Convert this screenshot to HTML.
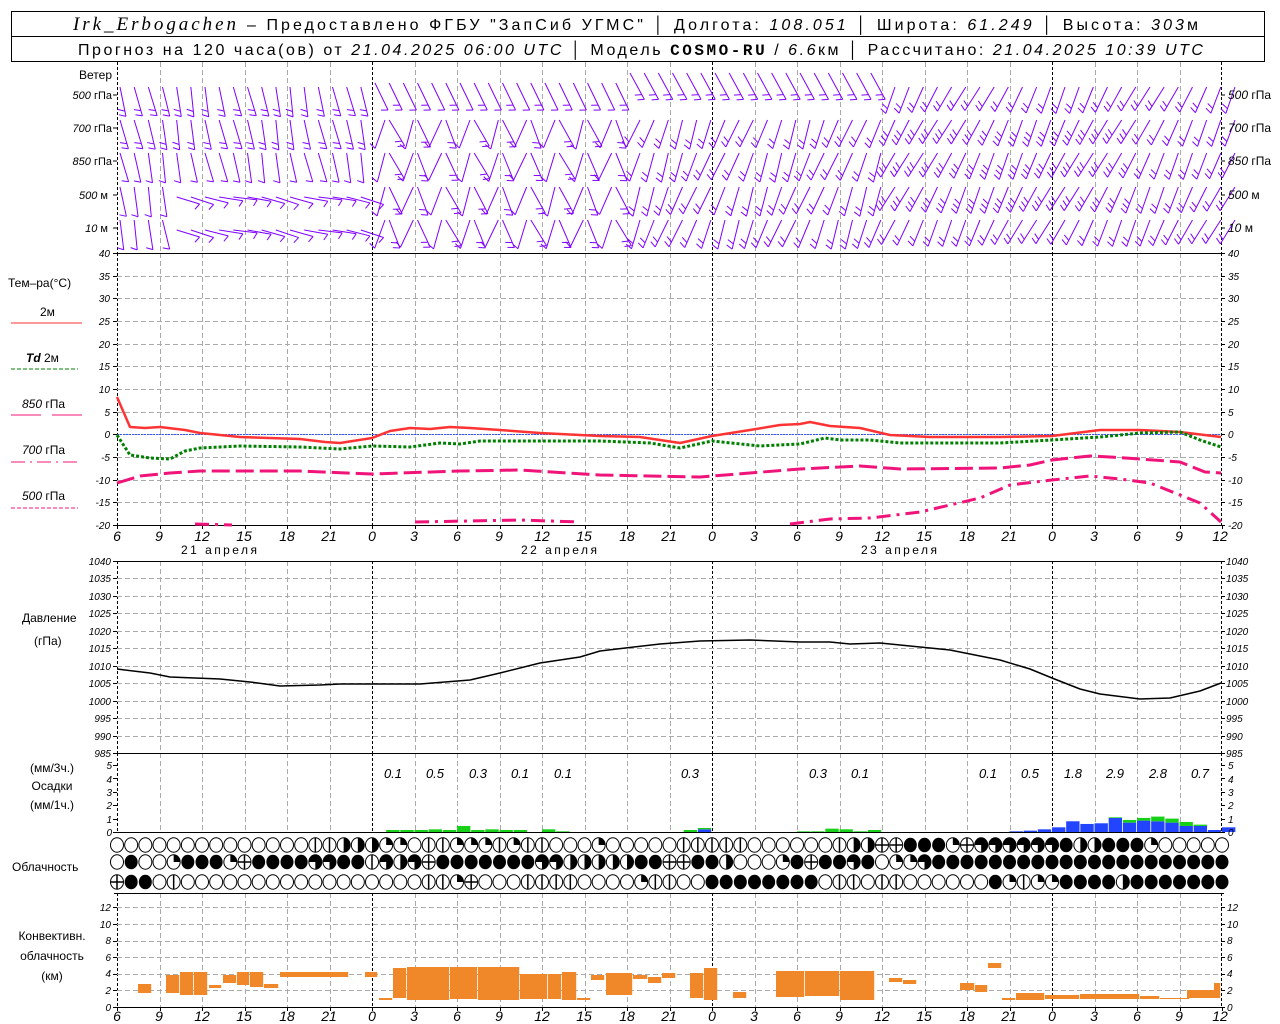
<!DOCTYPE html>
<html><head><meta charset="utf-8">
<style>
html,body{margin:0;padding:0;background:#fff;}
svg{display:block;font-family:"Liberation Sans",sans-serif;}
.t{font-size:12px;fill:#000;}
.n{font-size:10px;font-style:italic;fill:#000;font-family:"Liberation Sans",sans-serif;}
.h{font-size:14px;font-style:italic;fill:#000;font-family:"Liberation Sans",sans-serif;}
.hd{font-size:16px;fill:#000;}
.hi{font-size:19px;font-style:italic;fill:#000;font-family:"Liberation Serif",serif;}
.p{font-size:13px;font-style:italic;fill:#000;}
</style></head>
<body>
<svg id="s" width="1280" height="1024" viewBox="0 0 1280 1024" xmlns="http://www.w3.org/2000/svg">
<rect x="0" y="0" width="1280" height="1024" fill="#fff"/>
<g id="grid"></g>
<g id="data"></g>
<rect x="11.5" y="11.5" width="1253" height="50" fill="none" stroke="#000"/>
<line x1="11" y1="36.5" x2="1265" y2="36.5" stroke="#000"/>
<text x="73" y="30" class="hi" textLength="163" lengthAdjust="spacing">Irk_Erbogachen</text>
<text x="247" y="30" class="hd" textLength="951" lengthAdjust="spacing">– Предоставлено ФГБУ "ЗапСиб УГМС" │ Долгота: <tspan font-style="italic">108.051</tspan> │ Широта: <tspan font-style="italic">61.249</tspan> │ Высота: <tspan font-style="italic">303</tspan>м</text>
<text x="78" y="55" class="hd" textLength="1125" lengthAdjust="spacing">Прогноз на 120 часа(ов) от <tspan font-style="italic">21.04.2025 06:00 UTC</tspan> │ Модель <tspan font-family="Liberation Mono" font-weight="bold">COSMO-RU</tspan> / <tspan font-style="italic">6.6</tspan>км │ Рассчитано: <tspan font-style="italic">21.04.2025 10:39 UTC</tspan></text>
<g class="t" text-anchor="end">
<text x="112" y="79">Ветер</text>
<text x="112" y="99" font-size="11"><tspan font-style="italic">500</tspan> гПа</text>
<text x="112" y="132" font-size="11"><tspan font-style="italic">700</tspan> гПа</text>
<text x="112" y="165" font-size="11"><tspan font-style="italic">850</tspan> гПа</text>
<text x="108" y="199" font-size="11"><tspan font-style="italic">500</tspan> м</text>
<text x="108" y="232" font-size="11"><tspan font-style="italic">10</tspan>   м</text>
</g>
<g class="t" font-size="11">
<text x="1228" y="99"><tspan font-style="italic">500</tspan> гПа</text>
<text x="1228" y="132"><tspan font-style="italic">700</tspan> гПа</text>
<text x="1228" y="165"><tspan font-style="italic">850</tspan> гПа</text>
<text x="1228" y="199"><tspan font-style="italic">500</tspan> м</text>
<text x="1228" y="232"><tspan font-style="italic">10</tspan>   м</text>
</g>
<text x="8" y="287" class="t">Тем–ра(°С)</text>
<text x="40" y="316" class="t" font-size="11">2м</text>
<line x1="11" y1="323" x2="82" y2="323" stroke="#ff3333"/>
<text x="26" y="362" class="t" font-size="11"><tspan font-style="italic" font-weight="bold">Td</tspan>  2м</text>
<line x1="11" y1="369" x2="78" y2="369" stroke="#008000" stroke-dasharray="4,2"/>
<text x="22" y="408" class="t" font-size="11"><tspan font-style="italic">850</tspan> гПа</text>
<line x1="11" y1="415" x2="41" y2="415" stroke="#f0147a"/><line x1="52" y1="415" x2="82" y2="415" stroke="#f0147a"/>
<text x="22" y="454" class="t" font-size="11"><tspan font-style="italic">700</tspan> гПа</text>
<line x1="11" y1="462" x2="78" y2="462" stroke="#f0147a" stroke-dasharray="14,5,2,5"/>
<text x="22" y="500" class="t" font-size="11"><tspan font-style="italic">500</tspan> гПа</text>
<line x1="11" y1="508" x2="78" y2="508" stroke="#f0147a" stroke-dasharray="4,2"/>
<g class="n" text-anchor="end">
<text x="110" y="257">40</text><text x="110" y="280">35</text><text x="110" y="302">30</text><text x="110" y="325">25</text><text x="110" y="348">20</text><text x="110" y="370">15</text><text x="110" y="393">10</text><text x="110" y="416">5</text><text x="110" y="438">0</text><text x="110" y="461">-5</text><text x="110" y="484">-10</text><text x="110" y="506">-15</text><text x="110" y="529">-20</text>
</g>
<g class="n">
<text x="1228" y="257">40</text><text x="1228" y="280">35</text><text x="1228" y="302">30</text><text x="1228" y="325">25</text><text x="1228" y="348">20</text><text x="1228" y="370">15</text><text x="1228" y="393">10</text><text x="1228" y="416">5</text><text x="1228" y="438">0</text><text x="1228" y="461">-5</text><text x="1228" y="484">-10</text><text x="1228" y="506">-15</text><text x="1228" y="529">-20</text>
</g>
<g class="h" text-anchor="middle">
<text x="117" y="541">6</text><text x="159" y="541">9</text><text x="202" y="541">12</text><text x="244" y="541">15</text><text x="287" y="541">18</text><text x="329" y="541">21</text><text x="372" y="541">0</text><text x="414" y="541">3</text><text x="457" y="541">6</text><text x="499" y="541">9</text><text x="542" y="541">12</text><text x="584" y="541">15</text><text x="627" y="541">18</text><text x="669" y="541">21</text><text x="712" y="541">0</text><text x="754" y="541">3</text><text x="797" y="541">6</text><text x="839" y="541">9</text><text x="882" y="541">12</text><text x="924" y="541">15</text><text x="967" y="541">18</text><text x="1009" y="541">21</text><text x="1052" y="541">0</text><text x="1094" y="541">3</text><text x="1137" y="541">6</text><text x="1179" y="541">9</text><text x="1220" y="541">12</text>
</g>
<g class="t" text-anchor="middle" font-size="13">
<text x="219" y="554" textLength="76" lengthAdjust="spacing">21 апреля</text><text x="559" y="554" textLength="76" lengthAdjust="spacing">22 апреля</text><text x="899" y="554" textLength="76" lengthAdjust="spacing">23 апреля</text>
</g>
<text x="22" y="622" class="t">Давление</text>
<text x="34" y="645" class="t">(гПа)</text>
<g class="n" text-anchor="end" font-size="9">
<text x="111" y="565">1040</text><text x="111" y="582">1035</text><text x="111" y="600">1030</text><text x="111" y="617">1025</text><text x="111" y="635">1020</text><text x="111" y="652">1015</text><text x="111" y="670">1010</text><text x="111" y="687">1005</text><text x="111" y="705">1000</text><text x="111" y="722">995</text><text x="111" y="740">990</text><text x="111" y="757">985</text>
</g>
<g class="n" font-size="9">
<text x="1226" y="565">1040</text><text x="1226" y="582">1035</text><text x="1226" y="600">1030</text><text x="1226" y="617">1025</text><text x="1226" y="635">1020</text><text x="1226" y="652">1015</text><text x="1226" y="670">1010</text><text x="1226" y="687">1005</text><text x="1226" y="705">1000</text><text x="1226" y="722">995</text><text x="1226" y="740">990</text><text x="1226" y="757">985</text>
</g>
<g class="t" text-anchor="middle">
<text x="52" y="772">(мм/3ч.)</text><text x="52" y="790">Осадки</text><text x="52" y="809">(мм/1ч.)</text>
</g>
<g class="n" text-anchor="end">
<text x="112" y="769">5</text><text x="112" y="783">4</text><text x="112" y="796">3</text><text x="112" y="809">2</text><text x="112" y="823">1</text><text x="112" y="836">0</text>
</g>
<g class="n">
<text x="1228" y="769">5</text><text x="1228" y="783">4</text><text x="1228" y="796">3</text><text x="1228" y="809">2</text><text x="1228" y="823">1</text><text x="1228" y="836">0</text>
</g>
<g class="p" text-anchor="middle">
<text x="393" y="778">0.1</text><text x="435" y="778">0.5</text><text x="478" y="778">0.3</text><text x="520" y="778">0.1</text><text x="563" y="778">0.1</text><text x="690" y="778">0.3</text><text x="818" y="778">0.3</text><text x="860" y="778">0.1</text><text x="988" y="778">0.1</text><text x="1030" y="778">0.5</text><text x="1073" y="778">1.8</text><text x="1115" y="778">2.9</text><text x="1158" y="778">2.8</text><text x="1200" y="778">0.7</text>
</g>
<text x="12" y="871" class="t">Облачность</text>
<g class="t" text-anchor="middle">
<text x="52" y="940">Конвективн.</text><text x="52" y="960">облачность</text><text x="52" y="980">(км)</text>
</g>
<g class="n" text-anchor="end">
<text x="111" y="911">12</text><text x="111" y="928">10</text><text x="111" y="944">8</text><text x="111" y="961">6</text><text x="111" y="977">4</text><text x="111" y="994">2</text><text x="111" y="1011">0</text>
</g>
<g class="n">
<text x="1227" y="911">12</text><text x="1227" y="928">10</text><text x="1227" y="944">8</text><text x="1227" y="961">6</text><text x="1227" y="977">4</text><text x="1227" y="994">2</text><text x="1227" y="1011">0</text>
</g>
<g class="h" text-anchor="middle">
<text x="117" y="1021">6</text><text x="159" y="1021">9</text><text x="202" y="1021">12</text><text x="244" y="1021">15</text><text x="287" y="1021">18</text><text x="329" y="1021">21</text><text x="372" y="1021">0</text><text x="414" y="1021">3</text><text x="457" y="1021">6</text><text x="499" y="1021">9</text><text x="542" y="1021">12</text><text x="584" y="1021">15</text><text x="627" y="1021">18</text><text x="669" y="1021">21</text><text x="712" y="1021">0</text><text x="754" y="1021">3</text><text x="797" y="1021">6</text><text x="839" y="1021">9</text><text x="882" y="1021">12</text><text x="924" y="1021">15</text><text x="967" y="1021">18</text><text x="1009" y="1021">21</text><text x="1052" y="1021">0</text><text x="1094" y="1021">3</text><text x="1137" y="1021">6</text><text x="1179" y="1021">9</text><text x="1220" y="1021">12</text>
</g>
</svg>
<script>
(function(){
var NS="http://www.w3.org/2000/svg";
var G=document.getElementById('grid'),D=document.getElementById('data');
function el(p,tag,a){var e=document.createElementNS(NS,tag);for(var k in a)e.setAttribute(k,a[k]);p.appendChild(e);return e;}
function ln(p,x1,y1,x2,y2,c,w,da){var a={x1:x1,y1:y1,x2:x2,y2:y2,stroke:c,'stroke-width':w||1};if(da)a['stroke-dasharray']=da;return el(p,'line',a);}
var X0=117,X1=1221,HX=14.1667;
function X(h){return X0+h*HX;}
var panels=[[62,253],[253,525],[561,753],[753,832],[893,1007]];
panels.forEach(function(pn){
 for(var i=1;i<26;i++){var x=Math.round(X0+i*42.5)+0.5;var zero=(i%8==6);
  if(zero)ln(G,x,pn[0],x,pn[1],'#000',1,'3,2');else ln(G,x,pn[0],x,pn[1],'#aaa',1,'5,3');}
 ln(G,X0+.5,pn[0],X0+.5,pn[1],'#000',1,'3,2');ln(G,X1+.5,pn[0],X1+.5,pn[1],'#000',1,'3,2');
});
for(var v=35;v>=-15;v-=5){var y=Math.round(253+(40-v)*4.533)+.5;ln(G,X0,y,X1,y,'#aaa',1,'5,3');}
for(var p=1035;p>=990;p-=5){var y=Math.round(561+(1040-p)*3.491)+.5;ln(G,X0,y,X1,y,'#aaa',1,'5,3');}
for(var k=2;k<=12;k+=2){var y=Math.round(1007-k*8.3)+.5;ln(G,X0,y,X1,y,'#aaa',1,'5,3');}
[253.5,525.5,561.5,753.5,1007.5].forEach(function(y){ln(G,X0,y,X1,y,'#000',1);});
ln(G,X0-3,832.5,X1+3,832.5,'#000',1);ln(G,X0-3,893.5,X1+3,893.5,'#000',1);
function ticks(ys){ys.forEach(function(y){ln(G,X0-4,y,X0,y,'#000');ln(G,X1,y,X1+4,y,'#000');});}
var ty=[];for(var v=40;v>=-20;v-=5)ty.push(Math.round(253+(40-v)*4.533)+.5);ticks(ty);
ty=[];for(var p=1040;p>=985;p-=5)ty.push(Math.round(561+(1040-p)*3.491)+.5);ticks(ty);
ty=[];for(var k=0;k<=5;k++)ty.push(Math.round(832-k*13.4)+.5);ticks(ty);
ty=[];for(var k=0;k<=12;k+=2)ty.push(Math.round(1007-k*8.3)+.5);ticks(ty);
ticks([95,128,161,195,228]);
for(var i=0;i<=26;i++){var x=Math.round(X0+i*42.5)+.5;ln(G,x,525,x,529,'#000');ln(G,x,1007,x,1011,'#000');}
ln(D,X0,434.5,X1,434.5,'#3355ff',1,'2,1');
function poly(pts,c,w,da){var s=pts.map(function(p){return p[0]+','+p[1];}).join(' ');var a={points:s,fill:'none',stroke:c,'stroke-width':w,'stroke-linejoin':'round'};if(da)a['stroke-dasharray']=da;el(D,'polyline',a);}
poly([[117,397],[130,427],[145,428],[160,427],[185,430],[200,433],[240,437],[300,439],[325,442],[340,443],[372,438],[390,431],[410,428],[430,429],[450,427],[470,428],[500,430],[540,433],[600,436],[640,437],[680,443],[712,436],[750,430],[780,425],[800,424],[810,422],[830,426],[860,428],[890,435],[930,437],[1000,437],[1052,436],[1100,430],[1140,430],[1180,432],[1221,437]],'#ff3333',2.5);
poly([[117,435],[130,455],[150,458],[170,459],[185,451],[200,448],[240,446],[300,447],[340,449],[372,446],[410,447],[440,443],[460,444],[480,441],[500,441],[600,441],[650,443],[680,448],[712,441],[760,446],[800,444],[825,438],[840,440],[870,440],[900,443],[1000,443],[1052,440],[1100,437],[1140,433],[1180,432],[1200,440],[1221,447]],'#008000',3,'3,2');
poly([[117,483],[140,476],[170,473],[200,471],[300,471],[372,474],[460,471],[520,470],[600,475],[700,477],[800,469],[860,466],[900,469],[1000,468],[1030,465],[1052,460],[1090,456],[1110,457],[1140,459],[1180,462],[1205,472],[1221,473]],'#f0147a',3,'18,6');
poly([[195,524],[232,525]],'#f0147a',3,'14,6,3,6');
poly([[415,522],[520,520],[580,522]],'#f0147a',3,'14,6,3,6');
poly([[790,524],[830,519],[870,518],[920,512],[980,498],[1010,485],[1052,480],[1090,476],[1120,479],[1150,483],[1200,503],[1221,522]],'#f0147a',3,'14,6,3,6');
poly([[117,669],[150,673],[170,677],[220,679],[250,682],[280,686],[320,685],[340,684],[420,684],[470,680],[500,673],[540,663],[580,657],[600,651],[660,644],[700,641],[750,640],[800,642],[830,642],[850,644],[880,643],[900,645],[950,650],[980,656],[1000,660],[1030,669],[1052,678],[1080,689],[1100,694],[1140,699],[1170,698],[1200,691],[1221,683]],'#000',1.5);
function bar(i,v,c,base){var b=base||0;var y1=832-(b+v)*13.4;el(D,'rect',{x:X(i),y:y1,width:HX-0.8,height:v*13.4,fill:c});}
var gr={19:.15,20:.15,21:.15,22:.2,23:.15,24:.45,25:.15,26:.2,27:.15,28:.15,30:.2,31:.05,40:.15,48:.05,49:.05,50:.25,51:.2,52:.05,53:.15};
for(var k in gr)bar(+k,gr[k],'#18d018');
bar(41,0.2,'#2244ff');bar(41,0.1,'#18d018',0.2);
var bl={63:.05,64:.1,65:.2,66:.35,67:.8,68:.6,69:.65,70:1.05,71:.7,72:.85,73:.8,74:.7,75:.45,76:.45,77:.15,78:.35};
var gt={70:1.1,71:.9,72:1.05,73:1.15,74:1.0,75:.75,76:.55};
for(var k in bl){bar(+k,bl[k],'#2244ff');if(gt[k])bar(+k,gt[k]-bl[k],'#18d018',bl[k]);}
var cv=[[138,152,984,993],[166,180,975,993],[180,194,972,995],[194,208,972,995],[209,222,985,988],[223,237,975,983],[237,250,972,985],[250,264,972,987],[264,279,984,988],[280,349,972,977],[365,378,972,977],[379,393,998,1000],[393,407,968,998],[407,450,967,1000],[450,478,967,999],[478,520,967,1000],[520,548,974,999],[548,562,974,999],[562,577,972,1000],[577,591,998,1000],[591,605,975,980],[606,633,973,995],[633,648,975,979],[648,662,977,983],[662,676,973,978],[690,704,973,998],[704,718,968,1000],[733,747,992,998],[776,805,971,997],[805,840,971,996],[840,875,971,1000],[889,903,978,982],[903,917,980,984],[960,975,983,990],[975,988,985,992],[988,1002,963,968],[1002,1016,998,1000],[1016,1045,993,1000],[1045,1080,995,999],[1080,1140,994,999],[1140,1160,996,999],[1160,1190,998,999],[1187,1221,990,998],[1214,1221,983,990]];
cv.forEach(function(b){el(D,'rect',{x:b[0],y:b[2],width:b[1]-b[0]-0.8,height:b[3]-b[2],fill:'#f0882a'});});
var rows=[
 ["oooooooooooooovvhhhqqovvqqqvqvvoooqooooovvvvvoooooovhhccbbbqcttttttbhhbbbqoooo",845],
 ["obooqbbbqcbbbbttbbvthtcbbbbbbbtthhhhhbbccbbhoooqbcbbtboqqtbbbbbbbbbbbbbbbbbbbbbb",862],
 ["cbbovooooooooooooooooovvqcooovvvvooooqvvoobbbbbbbbovvovvoooooobqvqqbbbbhbbbbbbbbq",882]];
rows.forEach(function(r){var s=r[0],cy=r[1];
 for(var i=0;i<79;i++){var ch=s[i]||'o';var cx=X(i);
  var g=el(D,'g',{});
  if(ch=='b'){el(g,'ellipse',{cx:cx,cy:cy,rx:6.5,ry:7.2,fill:'#000'});continue;}
  el(g,'ellipse',{cx:cx,cy:cy,rx:6.5,ry:7.2,fill:'#fff',stroke:'#000','stroke-width':1});
  if(ch=='h')el(g,'path',{d:'M'+cx+','+(cy-7.2)+' A6.5,7.2 0 0,1 '+cx+','+(cy+7.2)+'Z',fill:'#000'});
  if(ch=='q')el(g,'path',{d:'M'+cx+','+cy+' L'+cx+','+(cy-7.2)+' A6.5,7.2 0 0,1 '+(cx+6.5)+','+cy+'Z',fill:'#000'});
  if(ch=='t')el(g,'path',{d:'M'+cx+','+cy+' L'+(cx-6.5)+','+cy+' A6.5,7.2 0 1,1 '+cx+','+(cy+7.2)+'Z',fill:'#000'});
  if(ch=='v'||ch=='c')ln(g,cx,cy-7,cx,cy+7,'#000',1.5);
  if(ch=='c')ln(g,cx-6,cy,cx+6,cy,'#000',1.5);
 }});
var W=el(D,'g',{});
var rowY=[95,128,161,195,228];
function barb(x,y,a,L,n){var ux=Math.sin(a),uy=Math.cos(a);
 var x2=x+ux*L,y2=y+uy*L;ln(W,x,y,x2,y2,'#8000ff',1);
 var ba=a-2.0;var bx=Math.sin(ba)*7,by=Math.cos(ba)*7;
 for(var k=0;k<n;k++){var f=1-k*0.18;var px=x+ux*L*f,py=y+uy*L*f;ln(W,px,py,px+bx,py+by,'#8000ff',1);}}
for(var r=0;r<5;r++){
 for(var i=0;i<79;i++){
  var x=X(i)+3,y=rowY[r]-8,a,n=2,L=30;
  if(i<18){a=0.2+0.1*Math.sin(i*0.9+r);n=(r<2)?2:1;
    if(r>=3&&i>3){a=1.35+0.1*Math.sin(i);L=24;y=rowY[r]+2;n=1;}}
  else if(i<36){a=(i%2?0.45:-0.35)+0.1*Math.sin(i+r);n=1+(i%2);
    if(r==0){a=0.45;y=rowY[r]-12;}}
  else if(i<54){a=-0.35+0.12*Math.sin(i*0.8+r*1.3);n=2;
    if(r==0){a=0.5;y=rowY[r]-22;}}
  else{a=-0.45+0.12*Math.sin(i*0.5+r);n=2;L=28;if(r>=1&&r<=3&&i<72){n=3;}}
  barb(x+(a<0?10:0),y,a,L,n);
 }}
})();
</script>
</body></html>
